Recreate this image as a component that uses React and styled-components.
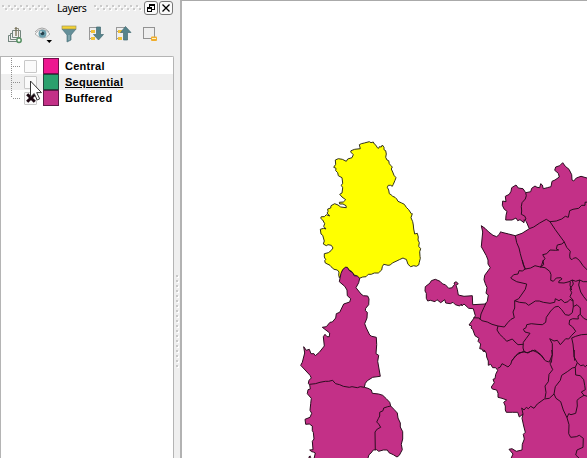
import React from "react";
import styled, { createGlobalStyle } from "styled-components";

const Global = createGlobalStyle`
  * { box-sizing: border-box; }
  body { margin: 0; background: #fff; overflow: hidden; }
`;

const Window = styled.div`
  display: flex;
  width: 587px;
  height: 458px;
  background: #efefef;
  font-family: "Liberation Sans", Arial, sans-serif;
  font-size: 11px;
  color: #000;
`;

const Dock = styled.aside`
  width: 174px;
  display: flex;
  flex-direction: column;
`;

const TitleBar = styled.header`
  height: 16px;
  display: flex;
  align-items: center;
  padding: 0 1px 0 2px;
`;

const Grip = styled.svg`
  display: block;
  width: ${(p) => p.$width}px;
  height: 6px;
`;

const Title = styled.span`
  width: 45px;
  padding-left: 8px;
  font-family: "Noto Sans", sans-serif;
  font-size: 10.5px;
  line-height: 16px;
  letter-spacing: -0.45px;
  white-space: nowrap;
`;

const TitleButton = styled.button`
  width: 14px;
  height: 14px;
  padding: 0;
  margin-left: 1px;
  display: flex;
  align-items: center;
  justify-content: center;
  border: 1px solid #777;
  border-radius: 3px;
  background: #fafafa;
`;

const Toolbar = styled.div`
  height: 40px;
  display: flex;
  align-items: center;
  padding: 0 0 4px 6px;
`;

const Tool = styled.span`
  width: 27px;
  height: 20px;
  display: flex;
  svg { display: block; }
`;

const LayerTree = styled.ul`
  flex: 1;
  margin: 0;
  padding: 1px 0 0;
  list-style: none;
  background: #fff;
  border: 1px solid #b4b4b4;
  border-bottom: 0;
  border-radius: 0 2px 0 0;
`;

const LayerRow = styled.li`
  height: 16px;
  display: flex;
  align-items: center;
  background: ${(p) => (p.$active ? "#efefef" : "transparent")};
`;

const Branch = styled.svg`
  width: 23px;
  height: 16px;
  display: block;
`;

const Check = styled.span`
  width: 13px;
  height: 13px;
  display: flex;
  align-items: center;
  justify-content: center;
  border: 1px solid #c8c8c8;
  border-radius: 1px;
  background: #fafafa;
`;

const Swatch = styled.span`
  width: 16px;
  height: 16px;
  margin-left: 6px;
  border: 1px solid rgba(30, 10, 30, 0.6);
  background: ${(p) => p.$color};
`;

const LayerName = styled.span`
  margin-left: 6px;
  font-weight: 700;
  font-size: 11px;
  line-height: 14px;
  letter-spacing: 0.27px;
  text-decoration: ${(p) => (p.$active ? "underline" : "none")};
  text-underline-offset: 1px;
`;

const Splitter = styled.div`
  width: 6px;
  display: flex;
  align-items: center;
  justify-content: center;
  padding-top: 184px;
`;

const MapCanvas = styled.main`
  width: 407px;
  border-top: 1px solid #aaa;
  border-left: 2px solid #b2b2b2;
  background: #fff;
  svg { display: block; }
`;

const Pointer = styled.svg`
  position: absolute;
  left: 29px;
  top: 80px;
`;

// Digitised survey sheets are stored at three units per map pixel,
// each with its own origin.
const sheet = (ox, oy, text) =>
  text.trim().split(/\s+/).map((pair) => {
    const [x, y] = pair.split(",").map(Number);
    return [ox + x / 3, oy + y / 3];
  });
const toPath = (points) => "M" + points.map(([x, y]) => `${x.toFixed(1)} ${y.toFixed(1)}`).join("L");

const northIsland = sheet(310, 135, `
  148,29 154,26 163,24 174,21 178,20 183,23 190,21 193,27 198,31 202,38 206,40 208,35 214,36 217,30 222,37 222,44
  227,47 229,57 227,67 231,75 236,77 238,86 243,92 247,96 244,102 248,111 252,121 258,128 255,136 253,141 250,148
  247,154 242,151 235,151 232,157 236,165 238,176 243,179 248,184 255,187 260,192 264,199 275,204 283,208
  289,217 296,224 304,236 307,236 303,248 308,260 310,270 311,282 314,297 322,295 325,306 324,315 328,323
  326,334 332,341 329,350 330,364 331,370 328,382 326,390 319,394 311,392 302,395 294,388 289,373 285,372
  279,369 268,374 258,379 247,384 241,390 234,391 221,388 217,395 215,405 205,414 193,414 184,418 175,418
  168,425 158,426 148,430 139,422 131,419 124,408 118,406 113,400 107,399 98,404 94,420 88,428 86,420 87,411
  82,405 72,403 63,395 60,391 46,384 44,377 47,374 43,366 43,356 55,353 63,347 69,339 64,331 54,329 49,332
  40,327 43,318 38,301 33,297 31,283 41,280 48,282 41,274 44,266 38,255 32,250 34,245 43,245 49,239 59,243
  51,234 54,230 53,222 62,219 63,212 74,206 84,210 92,216 109,218 108,212 99,207 89,207 88,202 100,201 107,194
  96,186 89,178 96,174 98,158 94,151 98,145 96,128 85,122 83,113 77,107 78,100 71,97 77,88 76,75 85,71
  97,73 109,79 113,72 126,68 130,59 122,51 123,47 134,43 151,41`);

const westIsland = sheet(295, 260, `
  138,40 143,29 151,22 157,22 164,33 173,38 177,47 187,48 194,55 191,68 183,83 198,102 205,107 218,108 222,117
  221,134 212,145 211,152 217,157 216,174 209,191 214,204 224,225 230,229 244,232 245,254 243,281 251,286
  248,304 256,349 233,352 217,362 211,370 208,382 219,385 229,390 232,400 251,402 263,406 274,416 284,427
  287,438 298,449 307,459 309,474 316,489 316,501 323,515 323,537 319,553 322,569 313,586 306,591 295,584
  282,578 277,570 265,570 251,574 245,569 235,570 228,579 222,584 218,597 42,597 42,590 46,588 45,594
  57,597 61,579 55,576 50,575 44,570 54,569 52,544 57,537 55,517 52,512 52,498 43,492 32,493 30,478
  45,472 50,460 45,451 47,431 49,415 37,401 39,389 46,387 44,375 40,370 42,361 49,354 45,346 17,316
  22,307 29,279 26,260 34,271 43,268 48,281 57,281 61,287 73,277 88,258 85,230 90,223 96,230 103,230
  104,219 82,202 94,200 105,187 112,186 122,174 124,161 134,157 146,132 164,126 167,116 157,107 156,90
  149,79 133,65`);

// The mainland coast is traced clockwise from the north-west cape.
const mainland = [
  ...sheet(420, 160, "184,197 195,205 206,216 219,226 230,230 238,223 242,215"),
  ...sheet(497, 155, `14,232 35,237 55,242 75,235 97,221 88,200 82,194 81,203 69,194 62,197 57,189 45,195 26,195
    27,181 30,169 22,163 16,151 17,138 27,140 25,124 37,118 42,109 44,98 57,90 64,99 78,101 86,113 101,110
    104,100 114,93 120,97 128,98 131,86 136,90 139,101 151,98 162,95 165,79 174,75 187,66 184,55 173,46
    176,36 188,32 197,23 205,34 216,43 224,59 225,75 230,78 238,69 252,64 273,70`),
  [590, 178], [590, 462],
  ...sheet(462, 350, `145,330 153,312 141,298 150,296 163,304 180,300 181,283 187,267 184,253 190,247 185,228
    180,205 183,192 172,201 167,187 152,187 133,187 130,180 130,168 125,157 134,150 120,145 108,142 108,130
    104,120 91,117 88,111 97,98 93,88 99,86 101,73 107,61 101,53 92,53 86,43 79,46 79,33 74,21 73,9 65,0`),
  ...sheet(462, 260, "70,274 63,274 61,268 53,266 56,252 48,244 51,235 39,227 32,208 27,204 29,198 21,195 37,173 40,167 34,146 20,145 6,132 0,137"),
  ...sheet(420, 160, `126,438 124,432 119,438 106,434 99,427 91,431 77,429 74,419 62,428 51,419 45,425 31,421
    23,423 19,415 19,400 15,393 16,380 30,369 34,362 46,358 60,364 68,372 76,374 86,385 97,383 100,377
    104,374 102,369 108,365 115,371 108,376 112,388 115,405 132,409 157,407 158,434 195,432 202,424 205,405
    198,400 201,383 196,371 192,359 194,346 211,323 204,312 204,300 199,287 184,260 186,237 188,216`),
];

const boundaries = [
  sheet(295, 260, "44,373 61,371 75,367 91,364 101,364 113,361 117,366 122,371 134,374 145,379 163,382 171,380 187,383 196,380 208,382"),
  sheet(295, 260, "287,438 278,440 266,444 264,452 254,457 254,468 250,476 245,486 251,492 257,502 247,507 240,516 241,571"),
  sheet(497, 155, "86,113 88,122 85,132 75,143 73,155 74,168 73,178 83,183 87,192 82,197"),
  sheet(497, 155, "97,221 110,216 128,204 148,193 159,200 178,198 194,192 205,184 214,187 218,167 228,163 245,160 254,151 264,151 264,142 273,141"),
  sheet(497, 155, "55,242 59,263 66,279 70,296 79,329 86,343"),
  sheet(497, 155, "159,200 175,224 202,261 209,277 220,289 218,300 219,310 225,314 229,310 237,308 247,316 258,332 273,347"),
  sheet(497, 155, "202,261 194,267 181,270 178,282 185,285 176,286 159,285 149,296 137,299 144,311 138,318 140,329 133,335 130,337"),
  sheet(462, 260, "235,21 219,17 206,24 190,27 181,33 171,32 168,42 155,44 146,54 150,57 164,65 194,72 190,88 178,105 170,116 158,122 158,144 153,156 157,173 147,178 137,188 127,201 108,198 90,193 76,186 60,182 51,174 34,173"),
  sheet(462, 260, "235,21 249,23 263,34 267,44 266,61 274,64 283,54 297,53 300,57 291,63 290,68 306,69 321,65 331,60 341,64 353,60 364,65 376,65"),
  sheet(462, 260, "158,122 172,127 191,129 200,136 220,123 232,123 244,127 264,130 278,127 280,116 291,122 297,118 308,128 318,125 324,118 333,123"),
  sheet(462, 260, "331,60 334,72 324,87 329,98 324,110 333,120 334,140 331,158 321,166 310,164 299,149 289,139 278,141 266,153 253,172 251,187 241,194 225,193 208,191 194,194 192,203 184,208 189,216 204,220 193,235 184,247 183,264 187,276"),
  sheet(462, 260, "353,60 350,75 356,96 365,110 376,123"),
  sheet(462, 260, "334,140 345,134 355,144 355,163 348,168 349,177 332,176 323,180 321,193 332,201 341,214 329,226 320,237 311,236 295,254 286,241 276,243 263,236 271,251 271,283 268,308"),
  sheet(462, 260, "355,163 365,175 376,180"),
  sheet(462, 260, "329,234 341,229 358,224 376,223"),
  sheet(462, 260, "329,234 333,252 335,273 338,302"),
  sheet(462, 260, "72,130 66,142 57,162 54,179"),
  sheet(462, 260, "108,198 105,210 113,223 125,234 134,244 151,237 159,246 168,254 184,253"),
  sheet(462, 260, "187,276 171,278 160,288 150,302"),
  sheet(462, 260, "187,276 198,279 211,271 225,277 238,287 248,300"),
  sheet(462, 350, "107,55 115,51 120,41 128,45 138,51 146,43 150,31 160,20 167,13 185,4 195,8 210,3 219,0 238,15 250,32 260,36 264,31 271,14 269,0"),
  sheet(462, 350, "264,31 265,43 272,59 261,73 259,95 249,108 252,127 249,145"),
  sheet(462, 350, "183,192 179,174 186,180 193,172 199,176 206,169 216,175 226,162 247,147 262,145 276,132 282,145 296,155 304,180 315,203 321,224 320,251 326,262 343,260 352,256 364,265 363,292 345,300 341,315 352,325"),
  sheet(462, 350, "276,132 280,110 295,91 299,76 316,65 331,54 340,52 346,38 336,20 337,0"),
  sheet(462, 350, "346,38 356,47 364,45 370,50 376,44"),
  sheet(462, 350, "340,52 341,75 355,77 365,89 368,106 370,119 358,126 366,136 376,139"),
  sheet(462, 350, "366,136 353,144 345,151 346,168 341,190 327,194 320,191 315,203"),
  sheet(462, 260, "181,0 188,26"),
  sheet(462, 260, "244,0 239,15 235,21"),
  sheet(462, 260, "325,65 324,76 329,90"),
];

const Districts = () => (
  <svg width="405" height="457" viewBox="182 1 405 457" strokeWidth="1" strokeLinejoin="round">
    <path d={toPath(northIsland) + "Z"} fill="#ffff00" stroke="#34341c" />
    <g fill="#c33087" stroke="#2b0d1f">
      <path d={toPath(westIsland) + "Z"} />
      <path d={toPath(mainland) + "Z"} />
      {boundaries.map((line, i) => <path key={i} d={toPath(line)} fill="none" />)}
    </g>
  </svg>
);

const ridge = (count) =>
  Array.from({ length: count }, (_, i) => (
    <g key={i}>
      <rect x={i * 6 + 1} y="1" width="2" height="2" fill="#fff" />
      <rect x={i * 6} y="0" width="2" height="2" fill="#cbcbcb" />
      <rect x={i * 6 + 4} y="4" width="2" height="2" fill="#fff" />
      <rect x={i * 6 + 3} y="3" width="2" height="2" fill="#cbcbcb" />
    </g>
  ));

const GroupIcon = () => (
  <svg width="18" height="20" fill="none" stroke="#73857e">
    <path d="M12.500 6.500h2v7M6.500 13.500V6.500h7M4.500 15.500v-6h2M2.500 17.500v-6h2M2 17.500h9M4.500 15.500h6M6.500 13.500h8" />
    <path d="M12.500 13V4.500h-4" stroke="#8d8c7c" />
    <path d="M10 3v9" stroke="#777057" strokeWidth="1.300" />
    <circle cx="13" cy="16.200" r="2.200" fill="#f5fff5" stroke="#569062" strokeWidth="1.500" />
  </svg>
);
const EyeIcon = () => (
  <svg width="20" height="20" fill="none">
    <path d="M2 10Q9 1 17 10Q10 18 2 10Z" fill="#f8f8f8" stroke="#b3b3b3" />
    <path d="M2 8Q9 0 16 8" stroke="#a4a4a4" />
    <circle cx="9.500" cy="9.700" r="4" fill="#6c9fad" />
    <circle cx="9.500" cy="9.500" r="1.800" fill="#263f4b" />
    <path d="M7 8h2" stroke="#fff" />
    <path d="M13.500 16h5.500l-2.700 3Z" fill="#000" />
  </svg>
);
const FilterIcon = () => (
  <svg width="18" height="20">
    <path d="M2 5L7 11v7l4-2v-5L16 5Z" fill="#648f99" stroke="#4d747c" strokeWidth=".7" />
    <path d="M9 11v5" stroke="#9bbcc2" />
    <rect x="2" y="2" width="14" height="3" fill="#f4d333" stroke="#9f955c" strokeWidth=".7" />
  </svg>
);
const TreeIcon = ({ up }) => (
  <svg width="18" height="20" fill="none">
    <path d="M2.500 3v13M3 3.500h8M3 7.500h3M3 14.500h3" stroke="#999" />
    <rect x="4" y="6" width="4" height="3" fill="#f1c235" />
    <rect x="4" y="13" width="4" height="3" fill="#f1c235" />
    <path d={up ? "M11.500 2.500L17 8.500h-3.500v7.500h-4V8.500H6.500Z" : "M9.500 3h4v7.500h3L11.500 16 6.500 10.500h3Z"} fill="#55838b" stroke="#426a72" strokeWidth=".7" />
  </svg>
);
const RemoveIcon = () => (
  <svg width="18" height="20">
    <rect x="2.500" y="3.500" width="11" height="11" fill="#eee" stroke="#929292" />
    <rect x="10" y="12.500" width="6" height="4.500" rx="1" fill="#f0ad2c" />
    <path d="M11 14.500h4" stroke="#fff2bf" />
  </svg>
);

const layers = [
  { name: "Central", color: "#ed1790" },
  { name: "Sequential", color: "#2aa06d", active: true },
  { name: "Buffered", color: "#c33087", checked: true, last: true },
];

export default function App() {
  return (
    <Window>
      <Global />
      <Dock>
        <TitleBar>
          <Grip $width={47}>{ridge(8)}</Grip>
          <Title>Layers</Title>
          <Grip $width={49}>{ridge(8)}</Grip>
          <TitleButton aria-label="Float">
            <svg width="10" height="10" fill="none" stroke="#000"><path d="M3 1.500h6M3.500 1v3M8.500 1v5M6 6.500h3M1 4.500h5M1 5.500h5M1.500 4v5M5.500 4v5M1 8.500h5M3 2.500h6" /></svg>
          </TitleButton>
          <TitleButton aria-label="Close">
            <svg width="10" height="10" stroke="#000" strokeWidth="1.300"><path d="M1.500 1.500l7 7M8.500 1.500l-7 7" /></svg>
          </TitleButton>
        </TitleBar>
        <Toolbar>
          <Tool><GroupIcon /></Tool>
          <Tool><EyeIcon /></Tool>
          <Tool><FilterIcon /></Tool>
          <Tool><TreeIcon /></Tool>
          <Tool><TreeIcon up /></Tool>
          <Tool><RemoveIcon /></Tool>
        </Toolbar>
        <LayerTree>
          {layers.map((l) => (
            <LayerRow key={l.name} $active={l.active}>
              <Branch fill="none" stroke="#8f8f8f" strokeDasharray="1 1">
                <path d={l.last ? "M10.500 0v8" : "M10.500 0v16"} />
                <path d="M12 8.500h8" />
              </Branch>
              <Check>
                {l.checked && <svg width="10" height="10" stroke="#1b0711" strokeWidth="3"><path d="M1.200 1.200l7.600 7.600M8.800 1.200L1.200 8.800" /></svg>}
              </Check>
              <Swatch $color={l.color} />
              <LayerName $active={l.active}>{l.name}</LayerName>
            </LayerRow>
          ))}
        </LayerTree>
      </Dock>
      <Splitter>
        <svg width="3" height="93">
          {Array.from({ length: 19 }, (_, i) => (
            <g key={i}>
              <rect x="1" y={i * 5 + 1} width="2" height="2" fill="#fff" />
              <rect x="0" y={i * 5} width="2" height="2" fill="#c8c8c8" />
            </g>
          ))}
        </svg>
      </Splitter>
      <MapCanvas><Districts /></MapCanvas>
      <Pointer width="14" height="22" viewBox="0 0 14 22">
        <path d="M1.500 1v16l3.700-3.500 3 6.500 2.500-1.200-3-6.200h4.800Z" fill="#fff" stroke="#333" />
      </Pointer>
    </Window>
  );
}
